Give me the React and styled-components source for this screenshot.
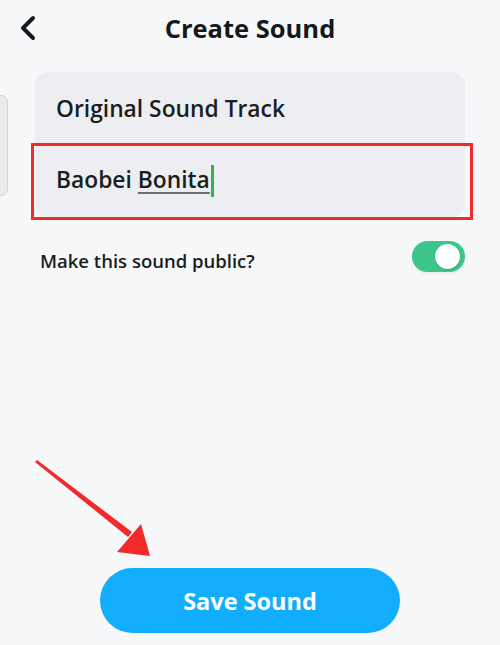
import React from "react";
import styled, { createGlobalStyle } from "styled-components";

const Global = createGlobalStyle`
  html, body { margin: 0; padding: 0; background: #f7f8fa; }
  body { font-family: "Open Sans", "Noto Sans", sans-serif; color: #16191c; }
  * { box-sizing: border-box; }
`;

const Screen = styled.div`
  position: relative;
  width: 500px;
  height: 645px;
  overflow: hidden;
  background: #f7f8fa;
  display: flex;
  flex-direction: column;
`;

const Header = styled.header`
  height: 56px;
  display: grid;
  grid-template-columns: 56px 1fr 56px;
  align-items: center;
`;

const BackButton = styled.button`
  border: 0;
  background: none;
  padding: 0 0 0 18px;
  height: 56px;
  display: flex;
  align-items: center;
`;

const Title = styled.h1`
  margin: 0;
  text-align: center;
  font-size: 25.5px;
  font-weight: 700;
  color: #16191c;
`;

const Content = styled.main`
  flex: 1;
  display: flex;
  flex-direction: column;
  padding: 16px 35px 0 35px;
`;

const Card = styled.div`
  background: #eceef1;
  border-radius: 13px;
  display: flex;
  flex-direction: column;
`;

const Field = styled.div`
  height: ${(p) => p.$h}px;
  display: flex;
  align-items: center;
  padding-left: 21px;
  font-size: 22.8px;
  font-weight: 600;
  color: #1b1e21;
`;

const Underlined = styled.span`
  text-decoration: underline;
  text-decoration-color: #6b6e72;
  text-decoration-thickness: 2px;
  text-underline-offset: 4px;
`;

const Caret = styled.span`
  display: inline-block;
  width: 3px;
  height: 32px;
  background: #2fb84a;
  vertical-align: middle;
  margin-left: 1px;
  position: relative;
  top: -1px;
`;

const ToggleRow = styled.div`
  display: flex;
  align-items: center;
  justify-content: space-between;
  padding: 24px 0 0 5px;
`;

const ToggleLabel = styled.span`
  font-size: 18.5px;
  font-weight: 600;
  color: #1b1e21;
  position: relative;
  top: 4px;
`;

const Switch = styled.div`
  width: 53px;
  height: 31px;
  border-radius: 16px;
  background: #3cc68a;
  display: flex;
  align-items: center;
  justify-content: flex-end;
  padding-right: 5px;
  box-shadow: 0 2px 4px rgba(0,0,0,0.06);
`;

const Knob = styled.div`
  width: 25px;
  height: 25px;
  border-radius: 50%;
  background: #fff;
  box-shadow: 0 1px 2px rgba(0,0,0,0.15);
`;

const Footer = styled.footer`
  display: flex;
  justify-content: center;
  padding-bottom: 12px;
`;

const SaveButton = styled.button`
  width: 300px;
  height: 65px;
  border: 0;
  border-radius: 33px;
  background: #12aefd;
  color: #fff;
  font-family: "Open Sans", sans-serif;
  font-size: 23.5px;
  font-weight: 700;
`;

const PeekCard = styled.div`
  position: absolute;
  left: -10px;
  top: 95px;
  width: 18px;
  height: 101px;
  border-radius: 7px;
  background: #e9eaec;
  border: 1px solid #d2d3d5;
`;

const Highlight = styled.div`
  position: absolute;
  left: 31px;
  top: 143px;
  width: 442px;
  height: 77px;
  border: 3px solid #f22a2a;
  pointer-events: none;
`;

const ArrowSvg = styled.svg`
  position: absolute;
  left: 0;
  top: 440px;
  pointer-events: none;
`;

export default function App() {
  return (
    <>
      <Global />
      <Screen>
        <PeekCard />
        <Header>
          <BackButton aria-label="Back">
            <svg width="20" height="26" viewBox="0 0 20 26">
              <path d="M15 3 L5 13 L15 23" fill="none" stroke="#16191c" strokeWidth="4" strokeLinecap="round" strokeLinejoin="round" />
            </svg>
          </BackButton>
          <Title>Create Sound</Title>
          <span />
        </Header>
        <Content>
          <Card>
            <Field $h={73}>Original Sound Track</Field>
            <Field $h={72}>
              <span>
                Baobei <Underlined>Bonita</Underlined>
                <Caret />
              </span>
            </Field>
          </Card>
          <ToggleRow>
            <ToggleLabel>Make this sound public?</ToggleLabel>
            <Switch>
              <Knob />
            </Switch>
          </ToggleRow>
        </Content>
        <Footer>
          <SaveButton>Save Sound</SaveButton>
        </Footer>
        <Highlight />
        <ArrowSvg width="170" height="120" viewBox="0 0 170 120">
          <polygon points="35,22 37,20 132,92 128,97" fill="#f22a2a" />
          <polygon points="150,116 117,112 141,84" fill="#f22a2a" />
        </ArrowSvg>
      </Screen>
    </>
  );
}
